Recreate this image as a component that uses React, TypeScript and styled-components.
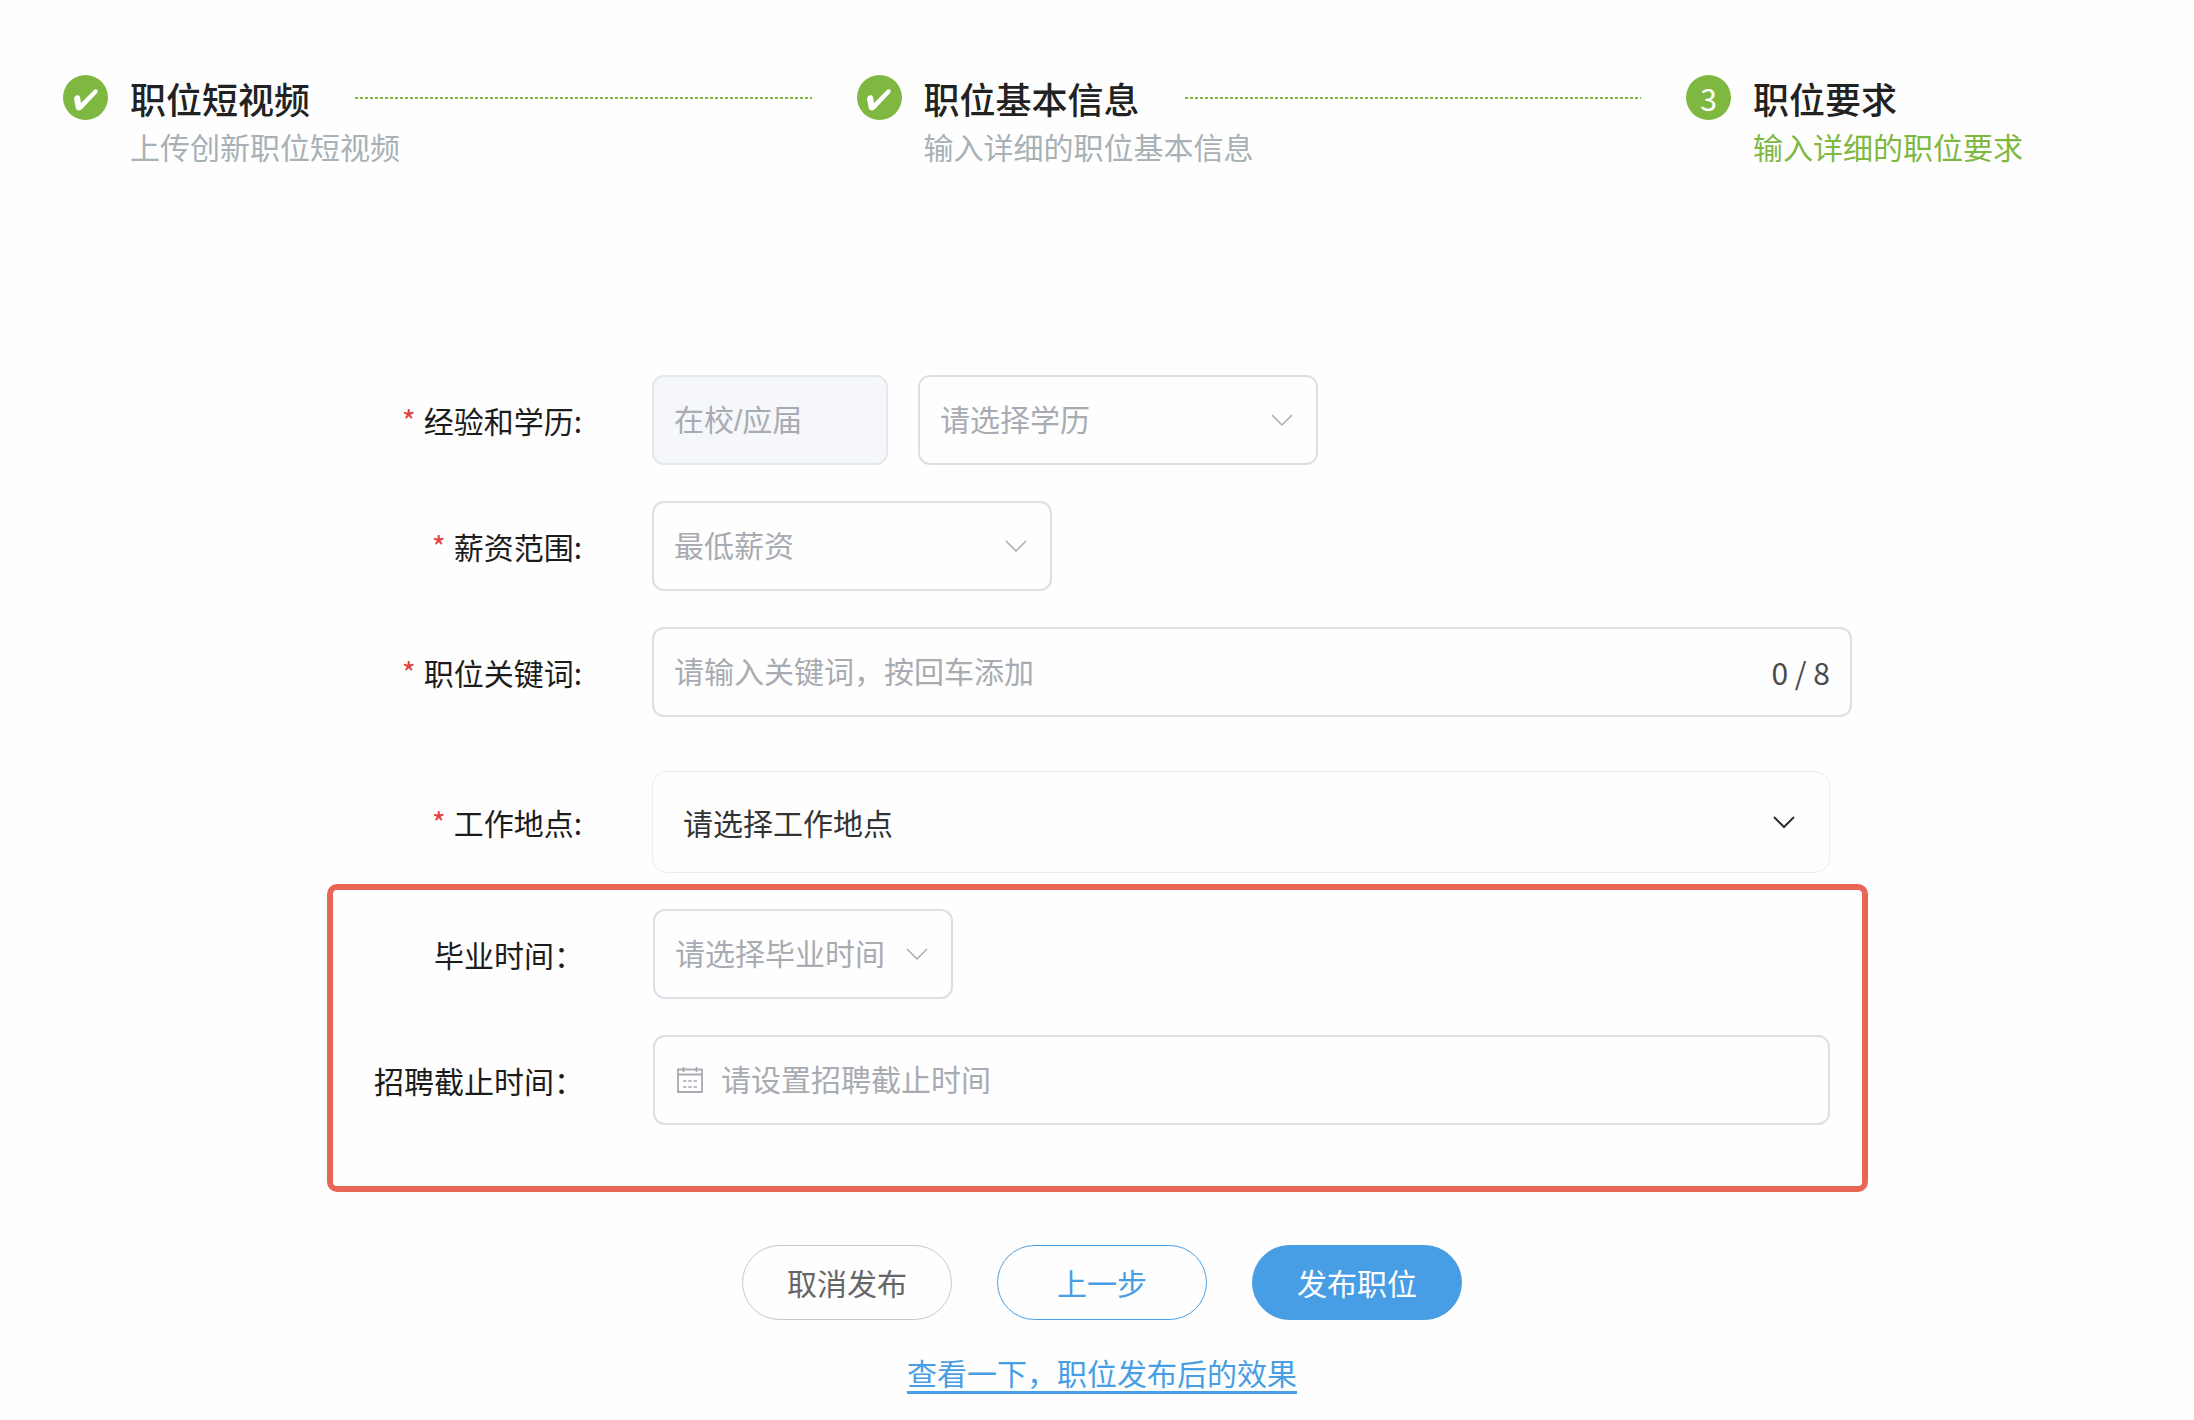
import React from 'react';
import styled, { createGlobalStyle, css } from 'styled-components';

const Global = createGlobalStyle`
  *, *::before, *::after { box-sizing: border-box; }
  body { margin: 0; background: #fefefe; }
  body, button, input, select {
    font-family: "Noto Sans CJK SC", sans-serif;
    font-size: 30px;
    line-height: 44px;
  }
`;

const Page = styled.div`
  color: #1c1c1c;
`;

const Steps = styled.ol`
  display: flex;
  margin: 0;
  padding: 75px 171px 0 63px;
  list-style: none;
`;

const Step = styled.li<{ $last?: boolean }>`
  display: flex;
  flex: ${p => (p.$last ? '0 0 auto' : '1 0 auto')};
  gap: 22px;
`;

const Badge = styled.span`
  display: flex;
  flex: none;
  align-items: center;
  justify-content: center;
  width: 45px;
  height: 45px;
  border-radius: 50%;
  background: #7fb841;
  color: #fff;
`;

const StepBody = styled.div`
  flex: 1;
  white-space: nowrap;
`;

const StepHead = styled.div`
  display: flex;
  align-items: center;
  height: 46px;
`;

const StepTitle = styled.h2`
  margin: 0;
  font-size: 36px;
  font-weight: 500;
  line-height: 48px;
  color: #222;
`;

const StepLine = styled.span`
  flex: 1 0 80px;
  height: 2px;
  margin: 0 45px;
  background: repeating-linear-gradient(to right, #7fb841 0 3px, transparent 3px 5px);
`;

const StepText = styled.p<{ $active?: boolean }>`
  margin: 3px 0 0;
  color: ${p => (p.$active ? '#7fb841' : '#a7b1b6')};
`;

const Form = styled.form`
  display: flex;
  flex-direction: column;
  padding: 207px 326px 24px 327px;
`;

const Fields = styled.div`
  display: flex;
  flex-direction: column;
  gap: 36px;
`;

const Row = styled.div<{ $end?: number; $top?: number }>`
  display: flex;
  align-items: center;
  gap: 70px;
  margin-top: ${p => p.$top ?? 0}px;
  padding-right: ${p => p.$end ?? 0}px;
`;

const Label = styled.label<{ $required?: boolean }>`
  flex: none;
  width: 255px;
  text-align: right;
  white-space: nowrap;
  ${p => p.$required && css`
    &::before {
      content: '*';
      margin-right: 8px;
      color: #e0443e;
    }
  `}
`;

const Highlight = styled.section`
  display: flex;
  flex-direction: column;
  gap: 36px;
  margin-top: 11px;
  padding: 19px 32px 61px 0;
  border: 6px solid #e96657;
  border-radius: 10px;

  ${Row} { gap: 69px; }
  ${Label} { width: 251px; }
`;

const Controls = styled.div`
  display: flex;
  flex: 1;
  gap: 30px;
`;

const Box = styled.div<{ $width?: number; $soft?: boolean }>`
  position: relative;
  display: flex;
  align-items: center;
  flex: ${p => (p.$width ? `0 1 ${p.$width}px` : '1')};
  height: ${p => (p.$soft ? 102 : 90)}px;
  border: ${p => (p.$soft ? '1px solid #ececee' : '2px solid #dcdfe6')};
  border-radius: ${p => (p.$soft ? 15 : 12)}px;
  color: ${p => (p.$soft ? '#333' : '#a8abb2')};
`;

const fieldText = css`
  width: 100%;
  height: 100%;
  border: 0;
  outline: 0;
  background: none;
  color: inherit;
`;

const Select = styled.select<{ $roomy?: boolean }>`
  ${fieldText}
  padding: ${p => (p.$roomy ? '0 0 0 30px' : '0 0 4px 20px')};
  appearance: none;
`;

const Input = styled.input`
  ${fieldText}
  padding: 0 20px 4px;
  &::placeholder { color: #a8abb2; opacity: 1; }
`;

const DisabledInput = styled(Input)`
  flex: 0 1 236px;
  width: 236px;
  height: 90px;
  border: 2px solid #e4e7ed;
  border-radius: 12px;
  background: #f5f7fa;
  color: #a8abb2;
  font-family: "Liberation Sans", "Noto Sans CJK SC", sans-serif;
`;

const Arrow = styled.svg<{ $end?: number }>`
  position: absolute;
  right: ${p => p.$end ?? 22}px;
  width: 24px;
  height: 14px;
  pointer-events: none;
`;

const Counter = styled.span`
  flex: none;
  padding-right: 20px;
  color: #4a4a4a;
`;

const CalendarIcon = styled.svg`
  flex: none;
  width: 28px;
  height: 28px;
  margin: 0 -3px 0 21px;
`;

const Actions = styled.div`
  display: flex;
  flex-direction: column;
  align-items: center;
  gap: 33px;
  margin-top: 53px;
  padding-left: 9px;
`;

const Buttons = styled.div`
  display: flex;
  gap: 45px;
`;

const Button = styled.button<{ $kind: 'plain' | 'outline' | 'primary' }>`
  width: 210px;
  height: 75px;
  padding: 0 0 2px;
  border: 1px solid ${p => (p.$kind === 'plain' ? '#c8c8c8' : '#489ee4')};
  border-radius: 38px;
  background: ${p => (p.$kind === 'primary' ? '#489ee4' : 'transparent')};
  color: ${p => ({ plain: '#666', outline: '#489ee4', primary: '#fff' })[p.$kind]};
`;

const PreviewLink = styled.a`
  border-bottom: 3px solid #489ee4;
  color: #489ee4;
  line-height: 38px;
  text-decoration: none;
`;

function Check() {
  return (
    <svg width="24" height="26" viewBox="0 -4 24 26" aria-hidden="true">
      <path d="M0 10C0 6 5 5 6 8L7 14 20 1C22-1 25 1 23 4L9 19C7 22 3 22 2 20Z" fill="#fff" />
    </svg>
  );
}

function Chevron({ end, dark }: { end?: number; dark?: boolean }) {
  return (
    <Arrow $end={end} viewBox="0 0 24 14" fill="none" aria-hidden="true">
      <path d="M2 2l10 10L22 2" stroke={dark ? '#303133' : '#a8abb2'} strokeWidth={dark ? 2 : 1.5} />
    </Arrow>
  );
}

function Calendar() {
  return (
    <CalendarIcon viewBox="0 0 28 28" fill="none" stroke="#a8abb2" strokeWidth="1.8" aria-hidden="true">
      <path d="M2 3.500h24v22.500H2zM2 8.500h24M7.500 1v5M20.500 1v5" />
      <path d="M7 15h14M7 21h14" strokeWidth="1.5" strokeDasharray="3.500 1.750" />
    </CalendarIcon>
  );
}

export default function App() {
  return (
    <Page>
      <Global />
      <Steps>
        <Step>
          <Badge><Check /></Badge>
          <StepBody>
            <StepHead><StepTitle>职位短视频</StepTitle><StepLine /></StepHead>
            <StepText>上传创新职位短视频</StepText>
          </StepBody>
        </Step>
        <Step>
          <Badge><Check /></Badge>
          <StepBody>
            <StepHead><StepTitle>职位基本信息</StepTitle><StepLine /></StepHead>
            <StepText>输入详细的职位基本信息</StepText>
          </StepBody>
        </Step>
        <Step $last aria-current="step">
          <Badge>3</Badge>
          <StepBody>
            <StepHead><StepTitle>职位要求</StepTitle></StepHead>
            <StepText $active>输入详细的职位要求</StepText>
          </StepBody>
        </Step>
      </Steps>

      <Form onSubmit={e => e.preventDefault()}>
        <Fields>
          <Row>
            <Label $required htmlFor="degree">经验和学历:</Label>
            <Controls>
              <DisabledInput aria-label="经验" value="在校/应届" disabled readOnly />
              <Box $width={400}>
                <Select id="degree"><option>请选择学历</option></Select>
                <Chevron />
              </Box>
            </Controls>
          </Row>
          <Row>
            <Label $required htmlFor="salary">薪资范围:</Label>
            <Controls>
              <Box $width={400}>
                <Select id="salary"><option>最低薪资</option></Select>
                <Chevron />
              </Box>
            </Controls>
          </Row>
          <Row $end={16}>
            <Label $required htmlFor="keywords">职位关键词:</Label>
            <Controls>
              <Box>
                <Input id="keywords" placeholder="请输入关键词，按回车添加" />
                <Counter>0 / 8</Counter>
              </Box>
            </Controls>
          </Row>
          <Row $end={38} $top={18}>
            <Label $required htmlFor="place">工作地点:</Label>
            <Controls>
              <Box $soft>
                <Select id="place" $roomy><option>请选择工作地点</option></Select>
                <Chevron end={33} dark />
              </Box>
            </Controls>
          </Row>
        </Fields>

        <Highlight>
          <Row>
            <Label htmlFor="graduation">毕业时间：</Label>
            <Controls>
              <Box $width={300}>
                <Select id="graduation"><option>请选择毕业时间</option></Select>
                <Chevron />
              </Box>
            </Controls>
          </Row>
          <Row>
            <Label htmlFor="deadline">招聘截止时间：</Label>
            <Controls>
              <Box>
                <Calendar />
                <Input id="deadline" placeholder="请设置招聘截止时间" />
              </Box>
            </Controls>
          </Row>
        </Highlight>

        <Actions>
          <Buttons>
            <Button type="button" $kind="plain">取消发布</Button>
            <Button type="button" $kind="outline">上一步</Button>
            <Button type="submit" $kind="primary">发布职位</Button>
          </Buttons>
          <PreviewLink href="#preview">查看一下，职位发布后的效果</PreviewLink>
        </Actions>
      </Form>
    </Page>
  );
}
